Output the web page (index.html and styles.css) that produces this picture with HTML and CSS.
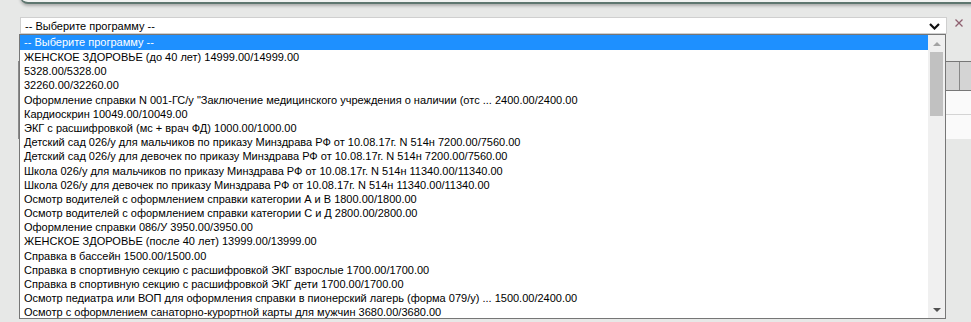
FILE: index.html
```
<!DOCTYPE html>
<html>
<head>
<meta charset="utf-8">
<link rel="stylesheet" href="styles.css">
</head>
<body>
<div class="panel"></div>
<div class="field-row">
  <div class="select">
    <span class="select-text">-- Выберите программу --</span>
    <svg class="chevron" width="11" height="7" viewBox="0 0 11 7"><path d="M1 1 L5.5 5.5 L10 1" fill="none" stroke="#111" stroke-width="2.2"/></svg>
  </div>
  <svg class="close" width="10" height="10" viewBox="0 0 10 10"><path d="M1.5 1.5 L8.5 8.5 M8.5 1.5 L1.5 8.5" stroke="#8e5f6f" stroke-width="1.3"/></svg>
</div>
<div class="table">
  <div class="thead"><div class="th th-main"></div><div class="th th-last"></div></div>
  <div class="tr"></div>
  <div class="tr tr-last"></div>
</div>
<div class="dropdown">
  <ul class="options">
    <li class="opt selected">-- Выберите программу --</li>
    <li class="opt">ЖЕНСКОЕ ЗДОРОВЬЕ (до 40 лет) 14999.00/14999.00</li>
    <li class="opt">5328.00/5328.00</li>
    <li class="opt">32260.00/32260.00</li>
    <li class="opt">Оформление справки N 001-ГС/у "Заключение медицинского учреждения о наличии (отс ... 2400.00/2400.00</li>
    <li class="opt">Кардиоскрин 10049.00/10049.00</li>
    <li class="opt">ЭКГ с расшифровкой (мс + врач ФД) 1000.00/1000.00</li>
    <li class="opt">Детский сад 026/у для мальчиков по приказу Минздрава РФ от 10.08.17г. N 514н 7200.00/7560.00</li>
    <li class="opt">Детский сад 026/у для девочек по приказу Минздрава РФ от 10.08.17г. N 514н 7200.00/7560.00</li>
    <li class="opt">Школа 026/у для мальчиков по приказу Минздрава РФ от 10.08.17г. N 514н 11340.00/11340.00</li>
    <li class="opt">Школа 026/у для девочек по приказу Минздрава РФ от 10.08.17г. N 514н 11340.00/11340.00</li>
    <li class="opt">Осмотр водителей с оформлением справки категории А и В 1800.00/1800.00</li>
    <li class="opt">Осмотр водителей с оформлением справки категории С и Д 2800.00/2800.00</li>
    <li class="opt">Оформление справки 086/У 3950.00/3950.00</li>
    <li class="opt">ЖЕНСКОЕ ЗДОРОВЬЕ (после 40 лет) 13999.00/13999.00</li>
    <li class="opt">Справка в бассейн 1500.00/1500.00</li>
    <li class="opt">Справка в спортивную секцию с расшифровкой ЭКГ взрослые 1700.00/1700.00</li>
    <li class="opt">Справка в спортивную секцию с расшифровкой ЭКГ дети 1700.00/1700.00</li>
    <li class="opt">Осмотр педиатра или ВОП для оформления справки в пионерский лагерь (форма 079/у) ... 1500.00/2400.00</li>
    <li class="opt">Осмотр с оформлением санаторно-курортной карты для мужчин 3680.00/3680.00</li>
  </ul>
  <div class="scrollbar">
    <div class="arrow arrow-up"></div>
    <div class="thumb"></div>
    <div class="track"></div>
    <div class="arrow arrow-down"></div>
  </div>
</div>
</body>
</html>
```
FILE: styles.css
```
html, body {
  margin: 0;
  padding: 0;
  height: 100%;
  overflow: hidden;
}
body {
  background: #e7e8e7;
  font-family: Arial, "Liberation Sans", sans-serif;
  font-size: 11px;
  color: #000;
  position: relative;
  padding-top: 1px;
  box-sizing: border-box;
}
.panel {
  margin: -13px -10px 0 20px;
  height: 14px;
  background: #f2f3f2;
  border: 1px solid #5f7770;
  border-top: none;
  border-bottom-width: 2px;
  border-radius: 0 0 0 8px;
  box-shadow: 0 2px 3px rgba(0,0,0,0.25);
}
.field-row {
  display: flex;
  align-items: flex-start;
  padding-left: 20px;
  margin-top: 13px;
}
.select {
  width: 927px;
  height: 17px;
  background: #fff;
  border: 1px solid #cfcfcf;
  display: flex;
  align-items: center;
  justify-content: space-between;
  padding: 0 6px 0 4px;
  box-sizing: border-box;
}
.select-text {
  line-height: 15px;
  padding-top: 1px;
}
.chevron {
  margin-top: 1px;
}
.close {
  margin-left: 7px;
  margin-top: 1px;
}
.table {
  margin: 27px 0 0 18px;
  border-left: 1px solid #8a8a8a;
}
.thead {
  display: flex;
  height: 28px;
  border-top: 1px solid #777;
  border-bottom: 1px solid #777;
}
.th {
  background: #d4d4d4;
}
.th-main {
  flex: 1;
  border-right: 1px solid #888;
}
.th-last {
  width: 11px;
}
.tr {
  height: 23px;
  background: #fafafa;
  border-bottom: 1px solid #d4d4d4;
}
.tr-last {
  height: 24px;
  border-bottom: none;
}
.dropdown {
  position: absolute;
  top: 34px;
  left: 19px;
  width: 925px;
  height: 283px;
  background: #fff;
  border: 1px solid #767676;
  display: flex;
}
.options {
  list-style: none;
  margin: 0;
  padding: 0;
  flex: 1;
  overflow: hidden;
}
.opt {
  height: 14.2px;
  line-height: 14.2px;
  padding-left: 4px;
  white-space: nowrap;
}
.opt.selected {
  background: #1e90ff;
  color: #fff;
  height: 15px;
  line-height: 15px;
}
.scrollbar {
  width: 17px;
  background: #f0f0f0;
  display: flex;
  flex-direction: column;
  align-items: center;
}
.arrow {
  width: 0;
  height: 0;
  border-left: 4px solid transparent;
  border-right: 4px solid transparent;
}
.arrow-up {
  border-bottom: 4px solid #a3a3a3;
  margin-top: 7px;
}
.arrow-down {
  border-top: 4px solid #505050;
  margin-bottom: 6px;
}
.thumb {
  width: 13px;
  height: 64px;
  background: #c1c1c1;
  margin-top: 6px;
}
.track {
  flex: 1;
}
```
